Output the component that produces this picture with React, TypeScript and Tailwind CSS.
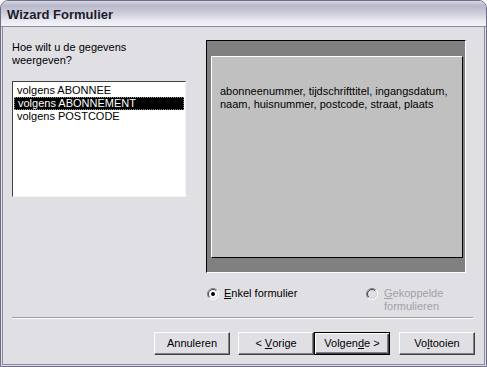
import React from 'react';

function Radio({ checked, disabled }: { checked?: boolean; disabled?: boolean }) {
  return (
    <svg width="12" height="12" viewBox="0 0 12 12" className="shrink-0">
      <circle cx="6" cy="6" r="5.5" fill={disabled ? '#e0dfe3' : '#ffffff'} />
      <path d="M2.1 9.9 A5.5 5.5 0 0 1 9.9 2.1" stroke="#808080" fill="none" />
      <path d="M9.9 2.1 A5.5 5.5 0 0 1 2.1 9.9" stroke="#ffffff" fill="none" />
      <path d="M2.8 9.2 A4.5 4.5 0 0 1 9.2 2.8" stroke="#404040" fill="none" />
      <path d="M9.2 2.8 A4.5 4.5 0 0 1 2.8 9.2" stroke="#d4d0c8" fill="none" />
      {checked && <circle cx="6" cy="6" r="2" fill="#000000" />}
    </svg>
  );
}

function Button({ children, primary, className = '' }: { children: React.ReactNode; primary?: boolean; className?: string }) {
  return (
    <div
      className={
        'w-[76px] h-[23px] flex items-center justify-center bg-[#e0dfe3] ' +
        (primary
          ? 'border border-black shadow-[inset_1px_1px_0_#ffffff,inset_-1px_-1px_0_#404040,inset_-2px_-2px_0_#808080] '
          : 'border-t border-l border-t-white border-l-white border-r border-b border-r-[#404040] border-b-[#404040] shadow-[inset_-1px_-1px_0_#808080] ') +
        className
      }
    >
      {children}
    </div>
  );
}

export default function App() {
  const items = ['volgens ABONNEE', 'volgens ABONNEMENT', 'volgens POSTCODE'];

  return (
    <div className="w-[487px] h-[367px] flex flex-col overflow-hidden bg-[#e0dfe3] border border-[#6e6e86] rounded-t-[8px] font-['Liberation_Sans',Arial,sans-serif] text-[11px] leading-[13px] text-black">
      {/* Title bar */}
      <div className="h-[26px] shrink-0 flex items-center pl-[6px] border-b border-[#8a8aa4] bg-[linear-gradient(180deg,#d8d8e4_0%,#b8b8cc_18%,#cacad8_45%,#eaeaf1_80%,#f4f4f8_100%)]">
        <span className="font-bold text-[13px] text-[#1c1c2c] pt-[1px]">Wizard Formulier</span>
      </div>

      {/* Body */}
      <div className="flex-1 flex flex-col mx-px mb-px border-x border-b border-[#8a8aa2]">
        <div className="flex pt-[13px] pl-[9px]">
          {/* Left column */}
          <div className="w-[174px] flex flex-col">
            <p className="pt-[1px]">
              Hoe wilt u de gegevens
              <br />
              weergeven?
            </p>
            <div className="mt-[14px] h-[116px] bg-white border-t border-l border-t-[#404040] border-l-[#404040] border-b border-r border-b-[#f4f4f4] border-r-[#f4f4f4] pt-[2px] pl-px pr-px">
              {items.map((item, i) => (
                <div
                  key={item}
                  className={
                    'h-[13px] pl-[3px] flex items-center whitespace-nowrap ' +
                    (i === 1 ? 'bg-black text-white border border-dotted border-[#8a8a8a] pl-[2px]' : '')
                  }
                >
                  {item}
                </div>
              ))}
            </div>
          </div>

          {/* Right column */}
          <div className="ml-[20px] w-[260px] flex flex-col">
            <div className="h-[233px] bg-[#808080] border-t border-l border-t-black border-l-black border-b border-r border-b-white border-r-white pt-[15px] pl-[4px] pr-[2px] pb-[14px]">
              <div className="h-full bg-[#c0c0c0] border-t border-l border-t-white border-l-white border-b border-r border-b-black border-r-black pt-[28px] pl-[8px] pr-[6px]">
                <p>
                  abonneenummer, tijdschrifttitel, ingangsdatum,
                  <br />
                  naam, huisnummer, postcode, straat, plaats
                </p>
              </div>
            </div>

            <div className="mt-[14px] flex h-[26px]">
              <div className="w-[160px] pl-px flex items-start gap-[5px]">
                <div className="pt-px">
                  <Radio checked />
                </div>
                <span>
                  <span className="underline">E</span>nkel formulier
                </span>
              </div>
              <div className="flex items-start gap-[6px] text-[#a2a1a6]">
                <div className="pt-px">
                  <Radio disabled />
                </div>
                <span>
                  <span className="underline">G</span>ekoppelde
                  <br />
                  formulieren
                </span>
              </div>
            </div>
          </div>
        </div>

        {/* Separator */}
        <div className="mt-[4px] ml-[9px] mr-[11px] border-t border-t-[#9d9da1] border-b border-b-white" />

        {/* Buttons */}
        <div className="mt-[13px] flex justify-end pr-[9px]">
          <Button>Annuleren</Button>
          <Button className="ml-[8px]">
            &lt; <span className="underline ml-[3px]">V</span>orige
          </Button>
          <Button primary>
            Volgen<span className="underline">d</span>e &gt;
          </Button>
          <Button className="ml-[9px]">
            Vo<span className="underline">l</span>tooien
          </Button>
        </div>
      </div>
    </div>
  );
}
